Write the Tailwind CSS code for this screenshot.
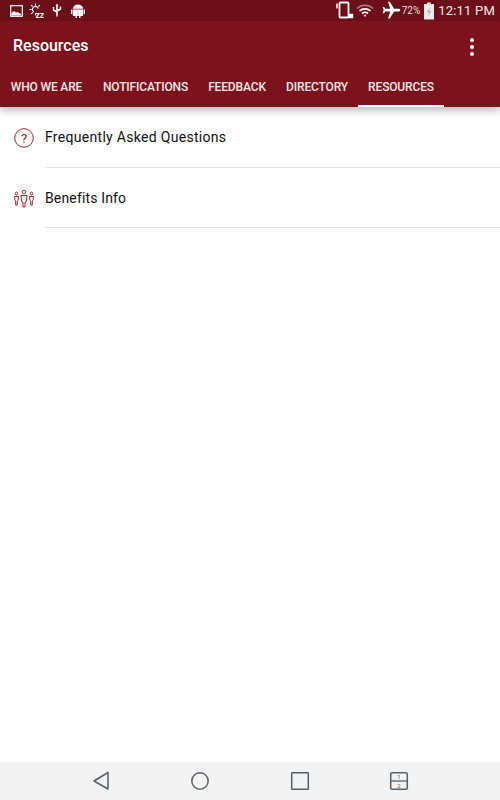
<!DOCTYPE html>
<html>
<head>
<meta charset="utf-8">
<script src="https://cdn.jsdelivr.net/npm/@tailwindcss/browser@4"></script>
</head>
<body class="m-0 bg-white font-['Roboto',sans-serif]">
<div class="w-[500px] h-[800px] flex flex-col overflow-hidden bg-white">
  <!-- status bar -->
  <div class="h-[21px] bg-[#6d0f18] flex items-center justify-between text-white shrink-0">
    <div class="flex items-center pl-[10px]">
      <svg width="13" height="12" viewBox="0 0 13 12"><rect x="0.7" y="0.7" width="11.600" height="10.600" fill="none" stroke="#fff" stroke-width="1.200"/><path d="M1.500 10.500V8l2.500-2 2 1.500 1.500-.5 3.500 2v1.500z" fill="#fff"/></svg>
      <svg width="15" height="16" viewBox="0 0 15 16" class="ml-[6px]"><g stroke="#fff" stroke-width="1.100" fill="none"><path d="M6.500 0.500v2.200M0.500 6.500h2.200M2.200 2.200l1.500 1.500M10.800 2.200L9.300 3.700M2.200 10.800l1.500-1.500M6.500 10.300v2.200"/><path d="M4.800 9a3 3 0 1 1 4.500-3.500"/></g><text x="6.500" y="15" fill="#fff" font-size="8.500" font-weight="700" font-family="Roboto">zz</text></svg>
      <svg width="10" height="15" viewBox="0 0 10 15" class="ml-[8px]"><path d="M5 0.500l1.500 2.500H5.800v8.500c0 1-.3 2-.8 3-.5-1-.8-2-.8-3V3H3.500z" fill="#fff"/><path d="M1.500 4v3l3.500 2M8.500 3.500v2.500L5 8" fill="none" stroke="#fff" stroke-width="1.500"/></svg>
      <svg width="14" height="14" viewBox="0 0 14 14" class="ml-[9px]"><path d="M1.800 5.500h10.400v5.500a1 1 0 0 1-1 1H9.500v2h-1.500v-2H6v2H4.500v-2H2.800a1 1 0 0 1-1-1zM1.800 4.800a5.200 4.300 0 0 1 10.400 0z" fill="#fff"/><rect x="0" y="5.500" width="1.300" height="4.500" fill="#fff"/><rect x="12.700" y="5.500" width="1.300" height="4.500" fill="#fff"/><rect x="6.600" y="5.500" width="0.800" height="6.500" fill="#c9b0b3"/></svg>
    </div>
    <div class="flex items-center pr-[5px]">
      <svg width="18" height="19" viewBox="0 0 18 19" class="mr-[2px]"><rect x="3.500" y="1.500" width="9" height="15" rx="1" fill="none" stroke="#fff" stroke-width="1.800"/><path d="M1 2.500v5M13.500 13.500h3v3h-3z" stroke="#fff" stroke-width="1.500" fill="#fff"/></svg>
      <svg width="18" height="14" viewBox="0 0 18 14" class="mr-[7px]"><path d="M1 4.500a11.500 11.500 0 0 1 16 0" fill="none" stroke="#a98287" stroke-width="1.600"/><path d="M3.500 7a8 8 0 0 1 11 0M6 9.500a4.500 4.500 0 0 1 6 0" fill="none" stroke="#fff" stroke-width="1.700"/><path d="M7.500 11.200a2.300 2.300 0 0 1 3 0L9 13z" fill="#fff"/></svg>
      <svg width="21" height="21" viewBox="0 0 24 24" class="rotate-90"><path d="M21 16v-2l-8-5V3.500A1.500 1.500 0 0 0 11.500 2 1.500 1.500 0 0 0 10 3.500V9l-8 5v2l8-2.500V19l-2 1.500V22l3.500-1 3.500 1v-1.500L13 19v-5.500z" fill="#fff"/></svg>
      <span class="text-[10px] leading-none text-[#e9dcdd] mr-[3px]">72%</span>
      <svg width="12" height="18" viewBox="0 0 11 18" class="mr-[3px]"><path d="M3.500 0.500h4v1.500h3v15.500H0.500V2h3z" fill="#f1e9ea"/><path d="M7.500 5L3 10h2.500l-1 4 3.500-5H5.500z" fill="#bcb0b1"/></svg>
      <span class="text-[13px] leading-none text-[#f3eced] tracking-[0.2px]">12:11 PM</span>
    </div>
  </div>
  <!-- app bar -->
  <div class="relative z-10 bg-[#7b121c] shrink-0 shadow-[0_4px_8px_rgba(0,0,0,0.25)]">
    <div class="h-[48px] flex items-center justify-between">
      <div class="pl-[13px] pt-[2px] text-[16px] font-medium text-white">Resources</div>
      <div class="flex flex-col gap-[3px] mr-[26px] mt-[3px]">
        <div class="w-[4px] h-[4px] rounded-full bg-white"></div>
        <div class="w-[4px] h-[4px] rounded-full bg-white"></div>
        <div class="w-[4px] h-[4px] rounded-full bg-white"></div>
      </div>
    </div>
    <div class="h-[38px] flex text-[12px] font-medium tracking-[-0.15px] text-[#f3e6e7]">
      <div class="w-[93px] flex items-center justify-center pb-[2px]">WHO WE ARE</div>
      <div class="w-[105px] flex items-center justify-center pb-[2px]">NOTIFICATIONS</div>
      <div class="w-[78px] flex items-center justify-center pb-[2px]">FEEDBACK</div>
      <div class="w-[82px] flex items-center justify-center pb-[2px]">DIRECTORY</div>
      <div class="w-[86px] flex items-center justify-center border-b-2 border-white">RESOURCES</div>
    </div>
  </div>
  <!-- list -->
  <div class="flex-1">
    <div class="h-[61px] flex items-center">
      <div class="w-[45px] flex justify-center">
        <svg width="20" height="20" viewBox="0 0 20 20" class="ml-[3px] mt-[1px]"><circle cx="10" cy="10" r="9.300" fill="none" stroke="#8d2a32" stroke-width="1"/><text x="10" y="14.500" text-anchor="middle" font-size="13" font-family="Roboto" fill="#8d2a32">?</text></svg>
      </div>
      <div class="flex-1 h-full flex items-center pt-[1px] border-b border-[#e3e3e3] text-[14px] tracking-[0.3px] text-[#111]">Frequently Asked Questions</div>
    </div>
    <div class="h-[60px] flex items-center">
      <div class="w-[45px] flex justify-center">
        <svg width="22" height="20" viewBox="0 0 22 20" class="ml-[2px] mt-[1px]" fill="none" stroke="#8d2a32" stroke-width="1"><circle cx="3.500" cy="4.500" r="1.400"/><path d="M1.500 7.500h4l-.5 4-.7.500v4H2.700v-4l-.7-.5z"/><circle cx="11" cy="3" r="1.800"/><path d="M8 6.500h6l-.7 6-1.300.5v5h-2v-5l-1.300-.5z"/><circle cx="18.500" cy="4.500" r="1.400"/><path d="M16.500 7.500h4l-.5 4-.7.500v4h-1.600v-4l-.7-.5z"/></svg>
      </div>
      <div class="flex-1 h-full flex items-center pt-[1px] border-b border-[#e3e3e3] text-[14px] tracking-[0.15px] text-[#111]">Benefits Info</div>
    </div>
  </div>
  <!-- nav bar -->
  <div class="h-[38px] bg-[#f3f3f3] relative shrink-0 flex items-center">
    <svg width="18" height="20" viewBox="0 0 18 20" class="ml-[92px]"><path d="M16 1.500V18L2 10z" fill="none" stroke="#56606a" stroke-width="1.500" stroke-linejoin="round"/></svg>
    <svg width="20" height="20" viewBox="0 0 20 20" class="ml-[80px]"><circle cx="10" cy="10" r="8.200" fill="none" stroke="#56606a" stroke-width="1.500"/></svg>
    <svg width="20" height="20" viewBox="0 0 20 20" class="ml-[80px]"><rect x="1.700" y="1.700" width="16.600" height="16.600" rx="0.500" fill="none" stroke="#56606a" stroke-width="1.500"/></svg>
    <svg width="20" height="20" viewBox="0 0 20 20" class="ml-[79px]"><rect x="1.700" y="1.700" width="16.600" height="16.600" rx="1.500" fill="none" stroke="#56606a" stroke-width="1.500"/><path d="M2 10h16" stroke="#56606a" stroke-width="1.300"/><text x="10" y="8" text-anchor="middle" font-size="6" font-family="Roboto" fill="#56606a">1</text><text x="10" y="16.500" text-anchor="middle" font-size="6" font-family="Roboto" fill="#56606a">2</text></svg>
  </div>
</div>
</body>
</html>
